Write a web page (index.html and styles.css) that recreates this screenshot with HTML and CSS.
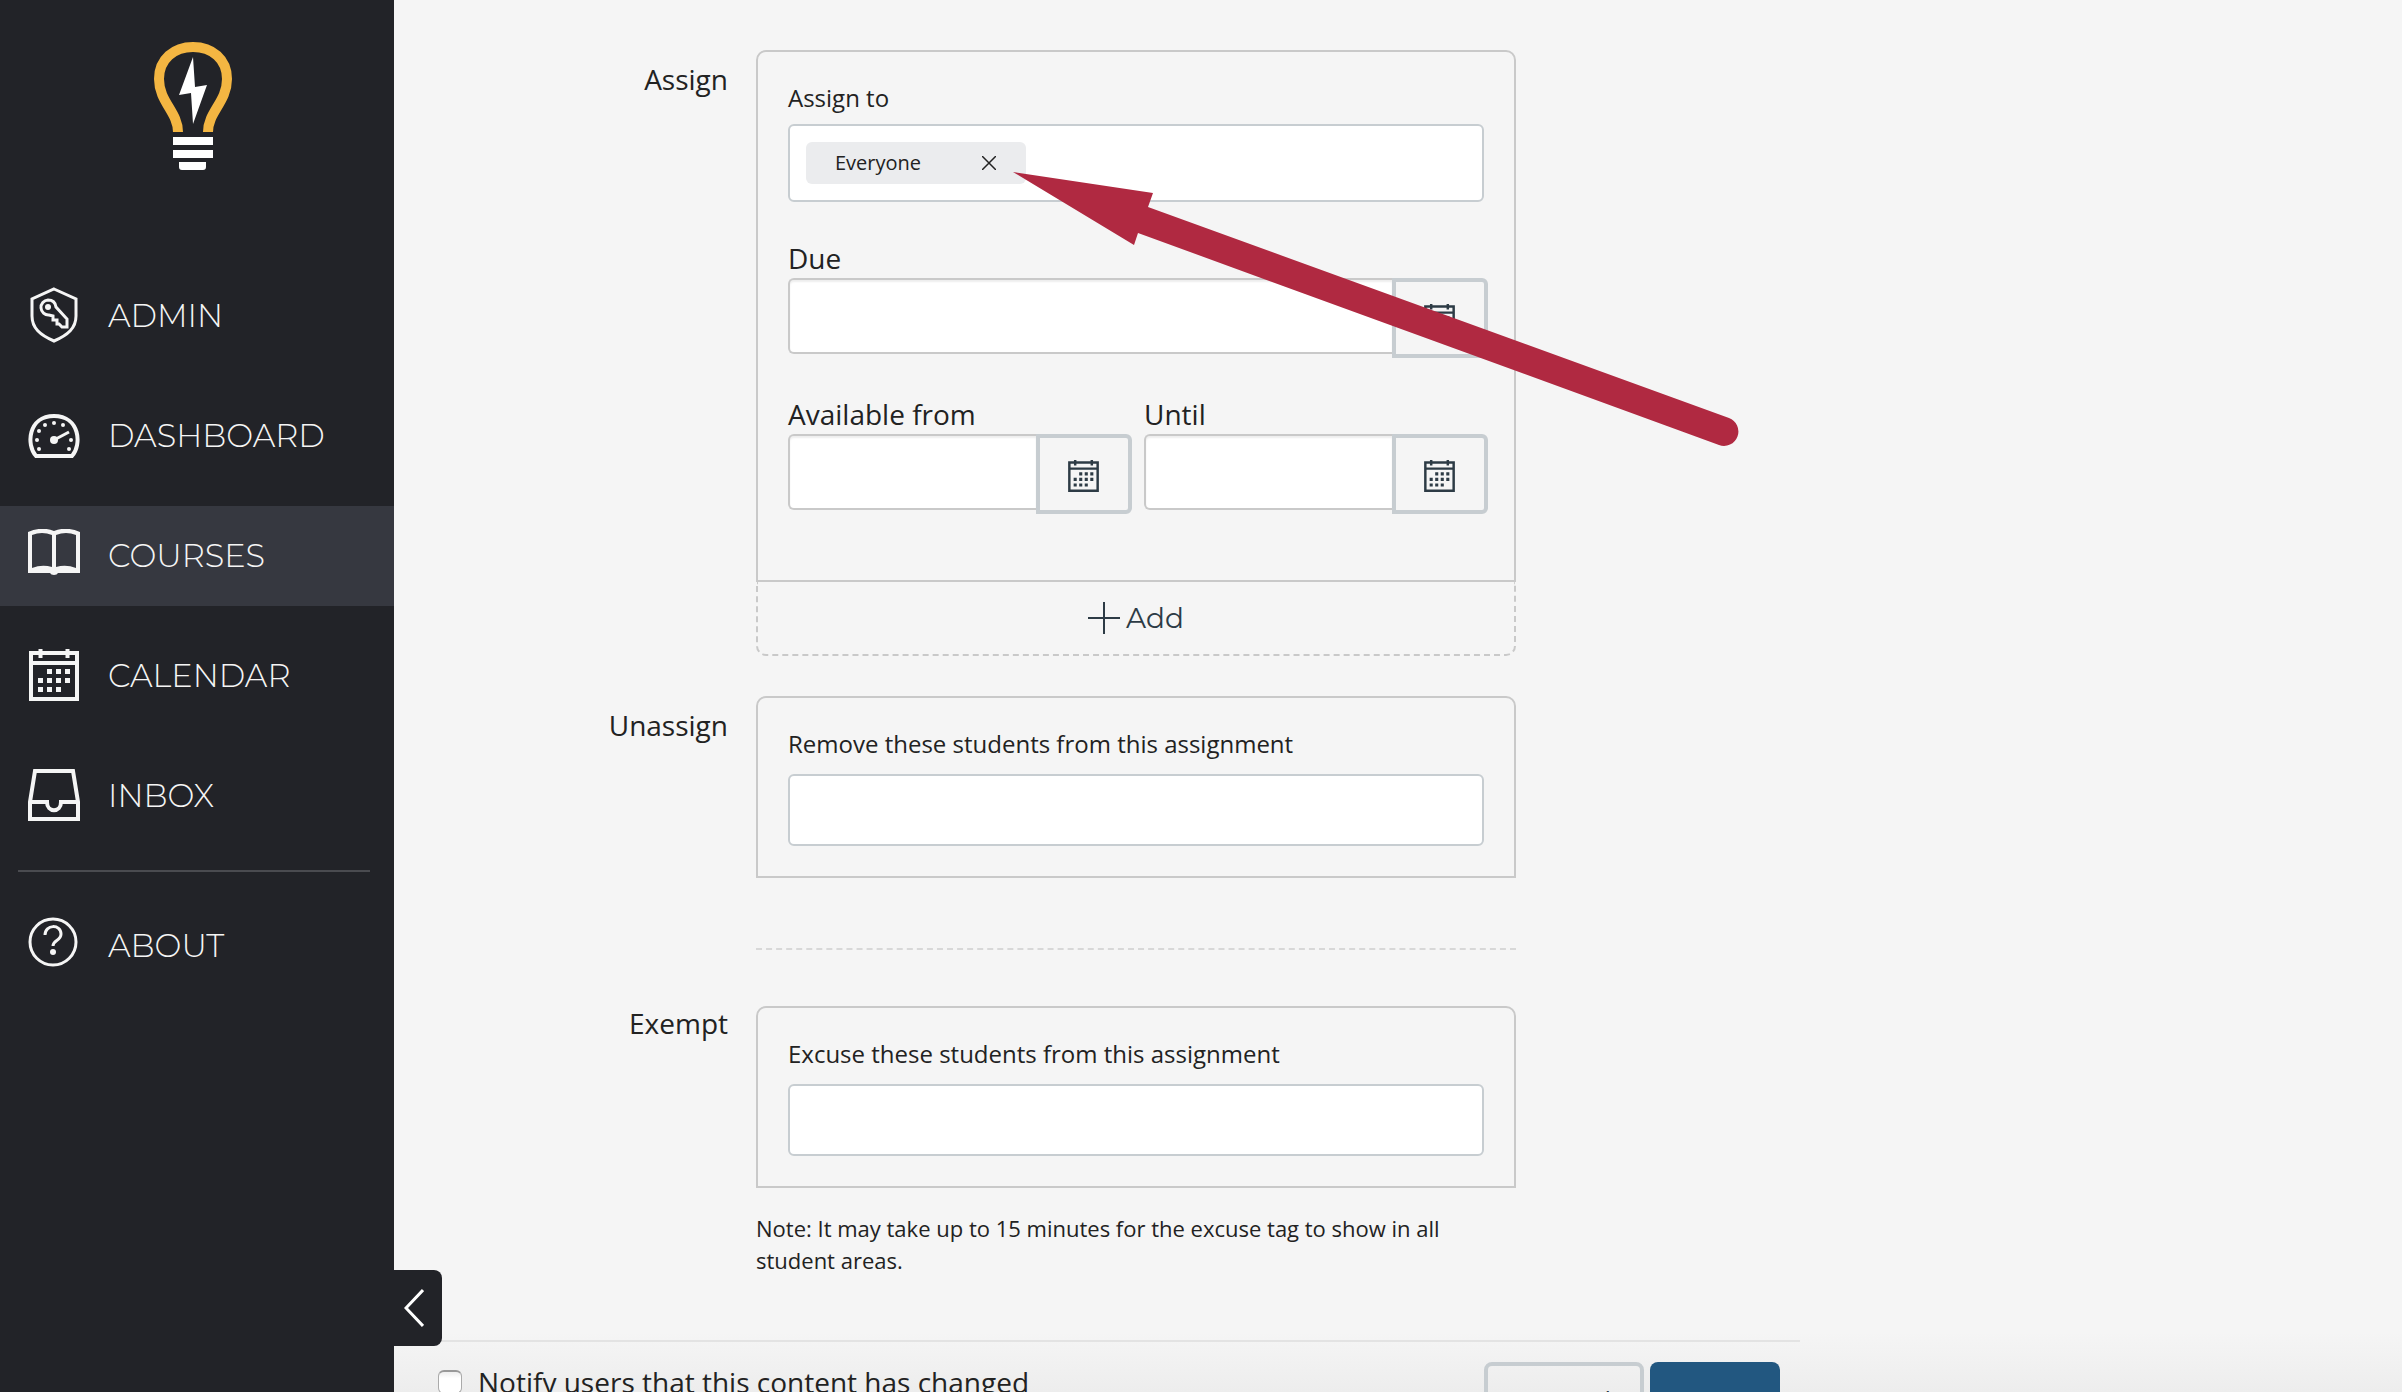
FILE: index.html
```html
<!DOCTYPE html>
<html lang="en">
<head>
    <meta charset="UTF-8">
    <meta name="viewport" content="width=device-width, initial-scale=1.0">
    <title>Assignment</title>
    <link rel="stylesheet" href="styles.css">
</head>
<body>
    <svg class="sprite" aria-hidden="true">
        <symbol id="icon-calendar" viewBox="0 0 50 52">
            <path fill="none" stroke="currentColor" stroke-width="4" d="M2 4h46v46H2zM2 14h46M11.500 0v9M38.500 0v9"/>
            <path fill="currentColor" d="M18 20h5v5h-5zM27 20h5v5h-5zM36 20h5v5h-5zM9 29h5v5H9zM18 29h5v5h-5zM27 29h5v5h-5zM36 29h5v5h-5zM9 38h5v5H9zM18 38h5v5h-5zM27 38h5v5h-5z"/>
        </symbol>
    </svg>

    <div class="layout">
        <nav class="sidebar">
            <a href="#" class="logo" aria-label="Home">
                <svg width="78" height="128" viewBox="0 0 78 128">
                    <path fill="none" stroke="#f4b642" stroke-width="10" d="M24 90C24 70 5 60 5 37C5 17 20 5 39 5S73 17 73 37C73 60 54 70 54 90"/>
                    <path fill="#fff" d="M39 15l2 30 12-2-14 39-2-31-12 2z"/>
                    <path fill="#fff" d="M19 95h40v8H19zM19 108h40v8H19zM25 120h27v5q0 3-3 3H28q-3 0-3-3z"/>
                </svg>
            </a>
            <ul class="menu">
                <li><a href="#">
                    <svg width="52" height="58" viewBox="0 0 52 58" fill="none" stroke="currentColor" stroke-width="3">
                        <path d="M26 2L48 12V29C48 41 40 48 26 54C12 48 4 41 4 29V12z"/>
                        <path d="M20 13a7 7 0 1 0 1 15l4 1v4h4v4h2l3 3h5V32L28 20q-1-7-8-7z"/>
                        <circle cx="20" cy="20" r="3" fill="currentColor" stroke="none"/>
                    </svg>
                    <span>ADMIN</span>
                </a></li>
                <li><a href="#">
                    <svg width="52" height="44" viewBox="0 0 52 44">
                        <path fill="none" stroke="currentColor" stroke-width="4" d="M8 42C-2 31 0 2 26 2S54 31 44 42z"/>
                        <path stroke="currentColor" stroke-width="3" d="M26 26L41 18"/>
                        <g fill="currentColor">
                            <circle cx="26" cy="26" r="4"/>
                            <circle cx="9" cy="26" r="2"/>
                            <circle cx="11" cy="17" r="2"/>
                            <circle cx="17" cy="11" r="2"/>
                            <circle cx="26" cy="9" r="2"/>
                            <circle cx="35" cy="11" r="2"/>
                            <circle cx="43" cy="26" r="2"/>
                            <circle cx="11" cy="35" r="2"/>
                            <circle cx="41" cy="35" r="2"/>
                        </g>
                    </svg>
                    <span>DASHBOARD</span>
                </a></li>
                <li><a href="#" class="active">
                    <svg width="52" height="54" viewBox="0 0 52 54">
                        <path fill="currentColor" fill-rule="evenodd" d="M0 3Q14-3 26 2Q38-3 52 3V44H30Q29 46 26 46T22 44H0zM4 6V39Q14 35 24 38V6Q14 2 4 6zM28 6V38Q38 35 48 39V6Q38 2 28 6z"/>
                    </svg>
                    <span>COURSES</span>
                </a></li>
                <li><a href="#">
                    <svg width="52" height="54" viewBox="0 0 52 54"><use href="#icon-calendar" width="52" height="52"/></svg>
                    <span>CALENDAR</span>
                </a></li>
                <li><a href="#">
                    <svg width="52" height="54" viewBox="0 0 52 54" fill="none" stroke="currentColor" stroke-width="4">
                        <path d="M7 2H45L50 33V50H2V33zM2 33H19C19 44 33 44 33 33H50"/>
                    </svg>
                    <span>INBOX</span>
                </a></li>
            </ul>
            <hr>
            <ul class="menu">
                <li><a href="#">
                    <svg width="52" height="58" viewBox="0 0 52 58" fill="none" stroke="currentColor" stroke-width="3">
                        <circle cx="25" cy="25" r="23"/>
                        <path d="M17 18C17 7 33 7 33 17C33 24 25 23 25 29"/>
                        <circle cx="25" cy="35" r="3" fill="currentColor" stroke="none"/>
                    </svg>
                    <span>ABOUT</span>
                </a></li>
            </ul>
            <button type="button" class="collapse" aria-label="Collapse menu">
                <svg width="20" height="40" viewBox="0 0 20 40" fill="none" stroke="currentColor" stroke-width="3">
                    <path d="M19 2L2 20L19 38"/>
                </svg>
            </button>
        </nav>

        <main>
            <form id="assignForm">
                <section class="row">
                    <h2>Assign</h2>
                    <div class="field">
                        <div class="card">
                            <label for="assignTo">Assign to</label>
                            <div class="tokens">
                                <span class="token">
                                    Everyone
                                    <button type="button" aria-label="Remove Everyone">
                                        <svg width="14" height="14" viewBox="0 0 14 14" stroke="currentColor" stroke-width="1.500"><path d="M0 0l14 14M14 0L0 14"/></svg>
                                    </button>
                                </span>
                                <input type="text" id="assignTo">
                            </div>
                            <div class="dates">
                                <div class="date wide">
                                    <label for="due">Due</label>
                                    <input type="text" id="due">
                                    <button type="button" aria-label="Pick due date"><svg width="31" height="32"><use href="#icon-calendar"/></svg></button>
                                </div>
                                <div class="date">
                                    <label for="from">Available from</label>
                                    <input type="text" id="from">
                                    <button type="button" aria-label="Pick start date"><svg width="31" height="32"><use href="#icon-calendar"/></svg></button>
                                </div>
                                <div class="date">
                                    <label for="until">Until</label>
                                    <input type="text" id="until">
                                    <button type="button" aria-label="Pick end date"><svg width="31" height="32"><use href="#icon-calendar"/></svg></button>
                                </div>
                            </div>
                        </div>
                        <button type="button" class="add">
                            <svg width="32" height="32" viewBox="0 0 32 32" stroke="currentColor" stroke-width="2"><path d="M16 0v32M0 16h32"/></svg>
                            Add
                        </button>
                        <svg class="arrow" width="728" height="278" viewBox="0 0 728 278">
                            <path fill="#b02941" d="M0 0L140 21L135 35L716 246A14 14 0 0 1 706 273L125 61L121 73z"/>
                        </svg>
                    </div>
                </section>

                <section class="row">
                    <h2>Unassign</h2>
                    <div class="field divided">
                        <div class="card">
                            <label for="unassign">Remove these students from this assignment</label>
                            <input type="text" id="unassign" class="students">
                        </div>
                    </div>
                </section>

                <section class="row exempt">
                    <h2>Exempt</h2>
                    <div class="field">
                        <div class="card">
                            <label for="exempt">Excuse these students from this assignment</label>
                            <input type="text" id="exempt" class="students">
                        </div>
                        <p class="note">Note: It may take up to 15 minutes for the excuse tag to show in all student areas.</p>
                    </div>
                </section>

                <footer class="actions">
                    <label><input type="checkbox" name="notify"> Notify users that this content has changed</label>
                    <button type="button" class="cancel">Cancel</button>
                    <button type="submit" class="save">Save</button>
                </footer>
            </form>
        </main>
    </div>
</body>
</html>
```
FILE: styles.css
```css
* {
    box-sizing: border-box;
}
body {
    margin: 0;
    font-family: 'Open Sans', sans-serif;
    font-size: 28px;
    line-height: 40px;
    color: #222;
    background-color: #f5f5f5;
}
button, input {
    font: inherit;
    color: inherit;
    margin: 0;
    padding: 0;
}
button {
    background: none;
    cursor: pointer;
}
svg {
    display: block;
    flex: none;
}
.sprite {
    display: none;
}
.layout {
    display: flex;
    height: 100vh;
    overflow: hidden;
}

/* sidebar */
.sidebar {
    position: relative;
    flex: 0 0 394px;
    background-color: #222328;
    color: #f5f5f5;
}
.logo {
    display: block;
    width: 78px;
    margin: 42px 0 96px 154px;
}
.menu {
    list-style: none;
    margin: 0;
    padding: 0;
}
.menu li {
    margin-bottom: 20px;
}
.menu a {
    display: flex;
    align-items: center;
    gap: 28px;
    height: 100px;
    padding: 0 28px;
    color: #f5f5f5;
    font-family: 'Montserrat', 'Inter', sans-serif;
    font-size: 32px;
    font-weight: 300;
    text-decoration: none;
}
.menu a.active {
    background-color: #363840;
}
.sidebar hr {
    height: 2px;
    margin: 24px 24px 24px 18px;
    border: none;
    background-color: #4a4b50;
}
.collapse {
    position: absolute;
    left: 100%;
    bottom: 46px;
    display: flex;
    align-items: center;
    width: 48px;
    height: 76px;
    padding-left: 10px;
    border: none;
    border-radius: 0 8px 8px 0;
    background-color: #222328;
    color: #fff;
}

/* form */
main {
    flex: 1;
    padding-top: 50px;
    background: linear-gradient(#f5f5f5, #ededed) bottom / 100% 60px no-repeat;
}
form {
    max-width: 1406px;
}
.row {
    display: grid;
    grid-template-columns: 334px minmax(0, 760px);
    column-gap: 28px;
}
.row h2 {
    margin: 9px 0 0;
    font-size: 28px;
    font-weight: 400;
    text-align: right;
}
.exempt h2 {
    margin-top: -3px;
}
.field {
    position: relative;
    padding-bottom: 40px;
}
.divided {
    padding-bottom: 70px;
    margin-bottom: 56px;
    border-bottom: 2px dashed #d8d8d8;
}
.exempt .field {
    padding-bottom: 64px;
}
.card {
    padding: 28px 30px 30px;
    border: 2px solid #c9c9c9;
    border-radius: 10px 10px 0 0;
}
.card label {
    display: block;
    font-size: 24px;
    line-height: 36px;
}
.card input {
    display: block;
    background-color: #fff;
    outline: none;
}
.students {
    width: 100%;
    height: 72px;
    margin-top: 12px;
    border: 2px solid #c7cdd1;
    border-radius: 6px;
}
.tokens {
    display: flex;
    align-items: center;
    height: 78px;
    margin-top: 8px;
    padding: 0 16px;
    border: 2px solid #c7cdd1;
    border-radius: 6px;
    background-color: #fff;
}
.tokens input {
    flex: 1;
    min-width: 0;
    border: none;
}
.token {
    display: flex;
    justify-content: space-between;
    align-items: center;
    width: 220px;
    height: 42px;
    padding: 0 30px 0 29px;
    border-radius: 6px;
    background-color: #ebecee;
    font-size: 20px;
}
.token button {
    border: none;
}
.dates {
    display: grid;
    grid-template-columns: 1fr 1fr;
    gap: 36px 12px;
    margin: 36px -4px 36px 0;
}
.date {
    display: grid;
    grid-template-columns: minmax(0, 1fr) 96px;
}
.wide {
    grid-column: 1 / -1;
}
.date label {
    grid-column: 1 / -1;
    font-size: 28px;
    line-height: 40px;
}
.date input {
    height: 76px;
    border: 2px solid #c9c9c9;
    border-right: none;
    border-radius: 6px 0 0 6px;
    box-shadow: inset 0 2px 2px #eee;
}
.date button {
    display: flex;
    align-items: center;
    justify-content: center;
    height: 80px;
    padding: 4px 2px 0 0;
    border: 4px solid #c7cdd1;
    border-radius: 0 6px 6px 0;
    color: #2d3b45;
}
.add {
    display: flex;
    align-items: center;
    justify-content: center;
    gap: 6px;
    width: 100%;
    height: 74px;
    border: 2px dashed #c9c9c9;
    border-top: none;
    border-radius: 0 0 10px 10px;
    color: #2d3b45;
    font-family: 'Montserrat', 'Inter', sans-serif;
}
.arrow {
    position: absolute;
    left: 257px;
    top: 122px;
    pointer-events: none;
}
.note {
    max-width: 720px;
    margin: 24px 0 0;
    font-size: 22px;
    line-height: 32px;
}

/* bottom bar */
.actions {
    display: flex;
    align-items: flex-start;
    gap: 6px;
    padding: 20px 20px 20px 44px;
    border-top: 2px solid #e3e3e3;
}
.actions label {
    display: flex;
    align-items: center;
    gap: 16px;
    margin-right: auto;
}
.actions input {
    appearance: none;
    width: 24px;
    height: 24px;
    border: 1px solid #aaa;
    border-top: 2px solid #999;
    border-radius: 6px;
    background: linear-gradient(#eee, #fff 30%);
}
.actions button {
    height: 80px;
    border-radius: 8px;
    font-family: 'Montserrat', 'Inter', sans-serif;
}
.cancel {
    width: 160px;
    border: 4px solid #c7cdd1;
    color: #2d3b45;
}
.save {
    width: 130px;
    border: none;
    background-color: #225780;
}
.actions .save {
    color: #fff;
}
```
